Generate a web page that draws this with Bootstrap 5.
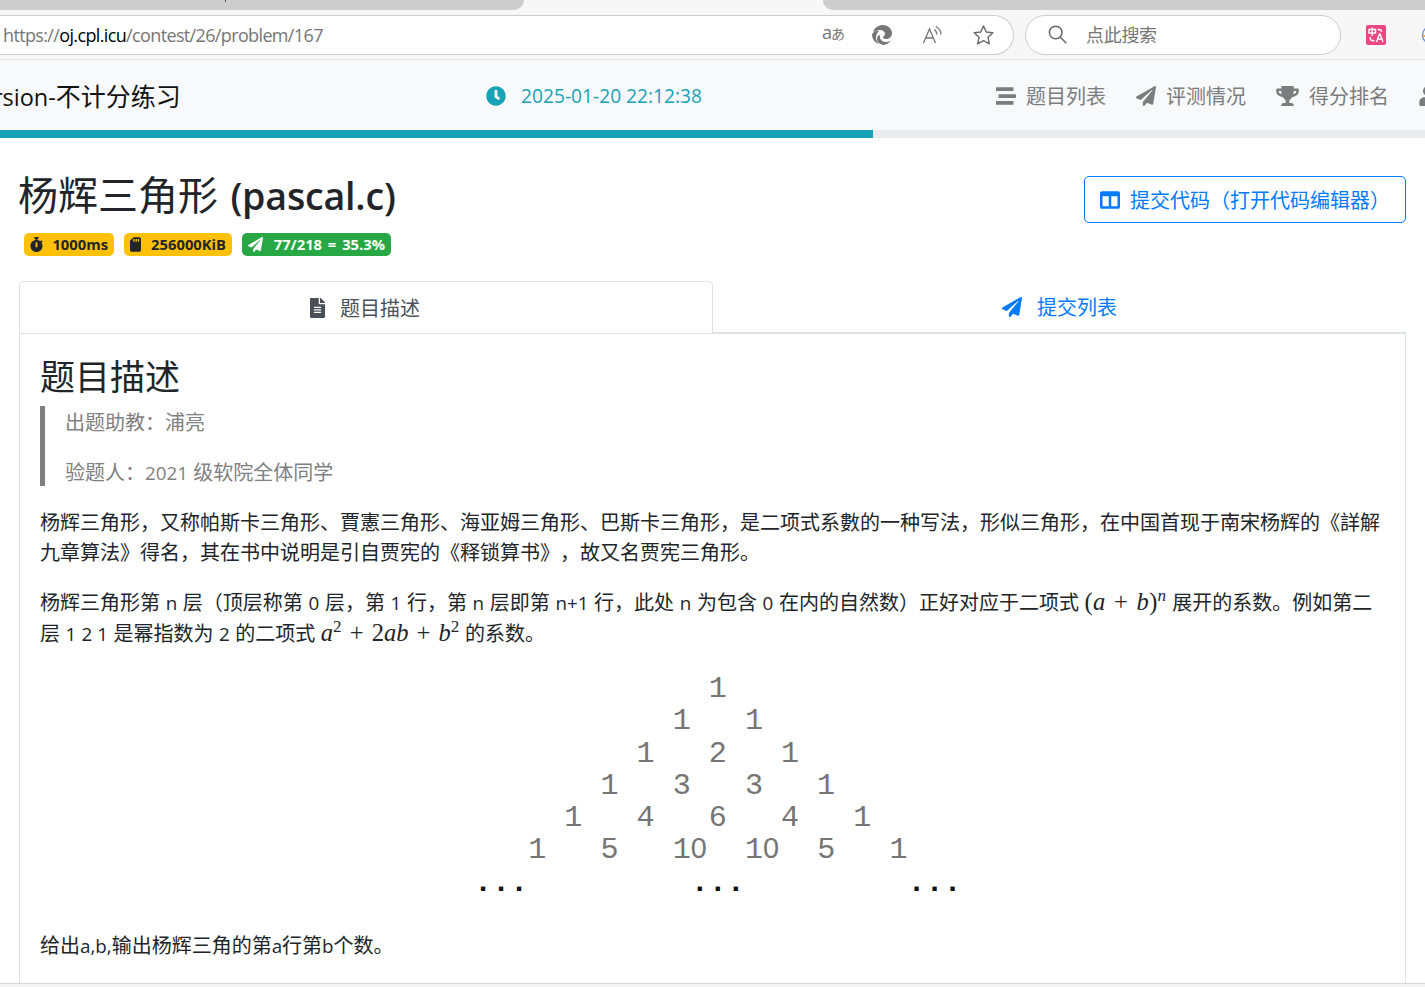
<!DOCTYPE html>
<html lang="zh-CN">
<head>
<meta charset="utf-8">
<title>杨辉三角形 (pascal.c)</title>
<link href="https://cdn.jsdelivr.net/npm/bootstrap@5.3.0/dist/css/bootstrap.min.css" rel="stylesheet">
<style>
:root{--bs-body-font-family:"Open Sans","Noto Sans CJK SC",sans-serif}
body{font-size:20px;line-height:30px;color:#212529;height:987px;overflow:hidden;text-spacing-trim:space-all;font-kerning:normal}
svg{fill:currentColor;flex:none;display:block}
.l-s{letter-spacing:-.64px;margin-left:-1px;padding-bottom:1px}
.latin{font-size:.94em}
.tabstrip{height:10px;background:#f7f7f7}
.tab-l{width:524px;background:#cdcdcd;border-bottom-right-radius:10px}
.tab-l::before{content:"";display:block;width:1px;height:2px;margin-left:225px;background:#555}
.tab-r{width:602px;background:#cdcdcd;border-bottom-left-radius:10px}
.toolbar{height:50px;background:#f7f7f7;border-bottom:1px solid #e6e8ec;padding-top:5px;color:#767676;overflow:hidden}
.toolbar>*,.topnav>*{flex:none}
.addr{width:1014px;height:40px;background:#fff;border:1px solid #cdcdcd;border-left:0;border-radius:0 20px 20px 0;padding-left:4px;font-size:18px}
.addr .ico-a{margin-left:28px}
.search{width:316px;height:40px;background:#fff;border:1px solid #cdcdcd;border-radius:20px;margin-left:11px;padding-left:22px;font-size:18px;letter-spacing:-.3px}
.topnav{height:70px;background:#f8f9fb;white-space:nowrap;color:#7b7c7d;padding-top:2px;overflow:hidden}
.topnav>span{padding-top:2px}
.brand{width:486px;font-size:25px;color:#111}
.clock{width:510px;color:#17a2b8}
.clock .latin{font-size:.96em}
.timebar{height:8px;border-radius:0;background:#e9ecef}
.timebar .progress-bar{background:#17a2b8}
.head{padding:38px 19px 0;height:143px}
h1{font-size:40px;line-height:48px;font-weight:500;margin:-5px 0 0 -1px;white-space:nowrap;word-spacing:2px}
h1 .cjk,h2{font-weight:400}
h1 .latin{font-weight:600;letter-spacing:-.2px}
.tag{height:23px;border-radius:5px;padding:0 6px;font-size:15px;font-weight:700;line-height:21px;background:#ffc107;padding-bottom:1px;word-spacing:2px}
.tag .latin{font-size:.985em}
.tag-ok{background:#28a745;color:#fff}
.open-btn{width:322px;height:47px;border:1px solid #007bff;color:#007bff;border-radius:5px;padding:1px 0 0 15px;font-size:20px;white-space:nowrap}
.pane-tabs{margin:0 19px;height:52px}
.pane-tabs span{padding-top:2px}
.pane-tabs .on{width:694px;border:1px solid #dee2e6;border-bottom:0;border-radius:5px 5px 0 0;color:#495057;padding-right:2px}
.pane-tabs .off{border-bottom:1px solid #dee2e6;color:#007bff}
.pane-tabs .off span{padding-top:3px}
.panel{margin:0 19px;height:650px;border:1px solid #dee2e6;border-bottom:0;padding:19px 19px 0 20px;white-space:nowrap}
.panel p{margin:0 0 20px}
h2{font-size:35px;line-height:42px;margin:3px 0 8px}
.note{border-left:5px solid #808080;color:#808080;padding:1.5px 0 0 20px;height:80px;margin-bottom:22px}
.tex{font-family:"Liberation Serif",serif;font-size:24.5px;line-height:1;word-spacing:2px}
.tex sup{font-size:.7em;top:-.55em}
.tri{font:30.1px/32.25px "Liberation Mono",monospace;color:#757575;margin:24px 0 0 434px;overflow:visible;height:258px}
.tri .z{font-family:"Liberation Sans",sans-serif;font-size:.96em;font-weight:400;letter-spacing:.069em;line-height:1}
.tri .dots{color:#111;font-weight:700}
.foot{height:4px;background:#f5f5f5;border-top:1px solid #d5d5d5}
</style>
</head>
<body>
<div class="tabstrip d-flex justify-content-between"><div class="tab-l"></div><div class="tab-r"></div></div>
<div class="toolbar d-flex">
  <div class="addr d-flex align-items-center">
    <span class="l-s me-auto">https://<span class="text-black">oj.cpl.icu</span>/contest/26/problem/167</span>
    <span style="font-size:18px;letter-spacing:-1px;line-height:20px;margin-top:-4px">a<span style="font-size:14px">あ</span></span>
    <svg class="ico-a" width="20" height="20" viewBox="0 0 20 20"><path d="M1 7C3 2 7 0 11 0c5 0 9 4 9 8 0 4-3 6-6 6-2 0-3-1-3-2 1-1 2-2 2-3 0-3-3-4-5-4C5 5 3 6 1 7z"/><path d="M0 9c2-3 5-4 7-3-2 2-3 4-3 7 0 2 1 4 3 6C3 18 0 14 0 9z"/><path d="M8 10c-1 4 2 7 6 7 2 0 4-1 5-2-2 4-6 5-8 5-4-1-6-3-6-6 0-2 1-4 3-4z"/></svg>
    <svg style="margin-left:30px" width="21" height="20" viewBox="0 0 21 20"><path fill="none" stroke="#767676" stroke-width="1.300" d="M1.500 18 7.500 4l6 14M3.500 13h8M12 4.500c2 1.200 2.800 2.800 2.800 5M14 1.500c3.300 2 5 4.500 5 8"/></svg>
    <svg style="margin:0 19px 0 30px" width="21" height="20" viewBox="0 0 21 20"><path fill="none" stroke="#686868" stroke-width="1.4" stroke-linejoin="round" d="m10.500 1 2.800 6 6.500.8-4.800 4.500 1.300 6.500-5.800-3.200-5.800 3.200L6 12.300 1.200 7.800 7.700 7z"/></svg>
  </div>
  <div class="search d-flex align-items-center">
    <svg width="20" height="20" viewBox="0 0 20 20"><path fill="none" stroke="#666" stroke-width="1.5" d="M14 7.500a6.300 6.300 0 1 1-12.600 0 6.300 6.300 0 0 1 12.600 0zM12.300 12.200l6 6"/></svg>
    <span style="margin-left:18px">点此搜索</span>
  </div>
  <svg style="margin:10px 0 0 25px" width="20" height="20" viewBox="0 0 20 20"><rect width="20" height="20" rx="2" fill="#ec4684"/><path fill="none" stroke="#fff" stroke-width="1.400" d="M3 4.500h6.500v3.500H3zM6.200 2.500V11M11.500 4.500q4-.5 4 2.500M4 12q0 4.500 4.500 3.500M10.500 17l3-8h.5l3 8M11.500 14h4.500"/></svg>
  <svg style="margin:10px 0 0 35px" width="20" height="20" viewBox="0 0 20 20"><circle cx="10" cy="10" r="8.500" fill="#fff" stroke="#7c94c8" stroke-width="1.500"/><path d="M2 11h8" stroke="#efa94f" stroke-width="2"/></svg>
</div>
<nav class="topnav d-flex align-items-center">
  <div class="brand"><span style="margin-left:-7px"><span class="latin">rsion-</span>不计分练习</span></div>
  <div class="clock d-flex align-items-center"><svg width="20" height="20" viewBox="0 0 512 512"><path d="M256 8C119 8 8 119 8 256s111 248 248 248 248-111 248-248S393 8 256 8zm57.100 350.100L224.900 294c-3.100-2.300-4.900-5.900-4.900-9.700V116c0-6.600 5.400-12 12-12h48c6.600 0 12 5.400 12 12v137.700l63.500 46.200c5.400 3.900 6.500 11.400 2.600 16.800l-28.200 38.800c-3.900 5.300-11.400 6.500-16.800 2.600z"/></svg><span class="latin" style="margin-left:15px">2025-01-20 22:12:38</span></div>
  <svg width="20" height="20" viewBox="0 0 512 512"><path d="M16 128h416c8.840 0 16-7.160 16-16V48c0-8.840-7.160-16-16-16H16C7.160 32 0 39.160 0 48v64c0 8.840 7.160 16 16 16zm480 80H80c-8.840 0-16 7.160-16 16v64c0 8.840 7.160 16 16 16h416c8.840 0 16-7.160 16-16v-64c0-8.840-7.160-16-16-16zm-64 176H16c-8.840 0-16 7.160-16 16v64c0 8.840 7.160 16 16 16h416c8.840 0 16-7.160 16-16v-64c0-8.840-7.160-16-16-16z"/></svg>
  <span style="margin:0 30px 0 10px">题目列表</span>
  <svg width="20" height="20" viewBox="0 0 512 512"><path id="plane" d="M476 3.200L12.500 270.600c-18.100 10.400-15.800 35.600 2.200 43.200L121 358.400l287.300-253.200c5.500-4.900 13.300 2.600 8.600 8.300L176 407v80.500c0 23.600 28.500 32.900 42.500 15.800L282 426l124.600 52.200c14.200 6 30.400-2.900 33-18.200l72-432C515 7.800 493.300-6.800 476 3.200z"/></svg>
  <span style="margin:0 30px 0 10px">评测情况</span>
  <svg width="23" height="20" viewBox="0 0 576 512"><path d="M552 64H448V24c0-13.300-10.700-24-24-24H152c-13.300 0-24 10.700-24 24v40H24C10.700 64 0 74.700 0 88v56c0 35.700 22.500 72.400 61.900 100.700 31.500 22.700 69.800 37.100 110 41.700C203.300 338.500 240 360 240 360v72h-48c-35.300 0-64 20.700-64 56v12c0 6.600 5.400 12 12 12h296c6.600 0 12-5.400 12-12v-12c0-35.300-28.700-56-64-56h-48v-72s36.700-21.500 68.100-73.600c40.300-4.600 78.600-19 110-41.700 39.300-28.300 61.900-65 61.900-100.700V88c0-13.300-10.700-24-24-24zM99.300 192.800C74.900 175.200 64 155.600 64 144v-16h64.200c1 32.600 5.800 61.200 12.800 86.200-15.100-5.200-29.200-12.400-41.700-21.400zM512 144c0 16.100-17.700 36.100-35.300 48.800-12.500 9-26.700 16.200-41.800 21.400 7-25 11.800-53.600 12.800-86.200H512v16z"/></svg>
  <span style="margin:0 30px 0 10px">得分排名</span>
  <svg width="18" height="20" viewBox="0 0 448 512"><path d="M224 256c70.700 0 128-57.300 128-128S294.700 0 224 0 96 57.300 96 128s57.300 128 128 128zm89.600 32H134.400C60.200 288 0 348.200 0 422.400V464c0 26.500 21.500 48 48 48h352c26.500 0 48-21.500 48-48v-41.600c0-74.200-60.200-134.400-134.400-134.400z"/></svg>
</nav>
<div class="progress timebar"><div class="progress-bar" style="width:61.26%"></div></div>
<header class="head d-flex justify-content-between">
  <div>
    <h1><span class="cjk">杨辉三角形</span> <span class="latin">(pascal.c)</span></h1>
    <div class="d-flex" style="gap:10px;margin:14px 0 0 5px">
      <div class="tag d-flex align-items-center justify-content-between" style="width:90px;margin-top:-1px"><svg width="13" height="15" viewBox="0 0 448 512"><path d="M432 304c0 114.900-93.100 208-208 208S16 418.900 16 304c0-104 76.300-190.200 176-205.500V64h-28c-6.600 0-12-5.400-12-12V12c0-6.600 5.400-12 12-12h120c6.600 0 12 5.400 12 12v40c0 6.600-5.400 12-12 12h-28v34.500c37.500 5.800 71.700 21.600 99.700 44.600l27.500-27.500c4.700-4.700 12.300-4.700 17 0l28.300 28.300c4.700 4.700 4.700 12.300 0 17l-30 30C419.700 223.300 432 262.200 432 304zm-176 36V188.500c0-6.600-5.400-12-12-12h-40c-6.600 0-12 5.400-12 12V340c0 6.600 5.400 12 12 12h40c6.600 0 12-5.400 12-12z"/></svg><span class="latin">1000ms</span></div>
      <div class="tag d-flex align-items-center justify-content-between" style="width:108px;margin-top:-1px"><svg width="11" height="15" viewBox="0 0 384 512"><path d="M320 0H128L0 128v320c0 35.300 28.700 64 64 64h256c35.300 0 64-28.700 64-64V64c0-35.300-28.700-64-64-64zM160 160h-48V64h48v96zm80 0h-48V64h48v96zm80 0h-48V64h48v96z"/></svg><span class="latin">256000KiB</span></div>
      <div class="tag tag-ok d-flex align-items-center justify-content-between" style="width:149px;margin-top:-1px"><svg width="15" height="15" viewBox="0 0 512 512"><use href="#plane"/></svg><span class="latin">77/218 = 35.3%</span></div>
    </div>
  </div>
  <button class="btn open-btn d-flex align-items-center"><svg width="20" height="20" viewBox="0 0 512 512"><path d="M464 32H48C21.490 32 0 53.490 0 80v352c0 26.510 21.490 48 48 48h416c26.510 0 48-21.490 48-48V80c0-26.510-21.490-48-48-48zM224 416H64V160h160v256zm224 0H288V160h160v256z"/></svg><span style="margin-left:10px;padding-top:1px">提交代码（打开代码编辑器）</span></button>
</header>
<div class="pane-tabs d-flex">
  <div class="on d-flex align-items-center justify-content-center"><svg width="15" height="20" viewBox="0 0 384 512"><path d="M224 136V0H24C10.700 0 0 10.700 0 24v464c0 13.300 10.700 24 24 24h336c13.300 0 24-10.700 24-24V160H248c-13.200 0-24-10.800-24-24zm64 236c0 6.600-5.400 12-12 12H108c-6.600 0-12-5.400-12-12v-8c0-6.600 5.400-12 12-12h168c6.600 0 12 5.400 12 12v8zm0-64c0 6.600-5.400 12-12 12H108c-6.600 0-12-5.400-12-12v-8c0-6.600 5.400-12 12-12h168c6.600 0 12 5.400 12 12v8zm0-72v8c0 6.600-5.400 12-12 12H108c-6.600 0-12-5.400-12-12v-8c0-6.600 5.400-12 12-12h168c6.600 0 12 5.400 12 12zm96-114.100v6.100H256V0h6.100c6.400 0 12.500 2.500 17 7l97.900 98c4.500 4.500 7 10.600 7 16.900z"/></svg><span style="margin-left:15px">题目描述</span></div>
  <div class="off flex-fill d-flex align-items-center justify-content-center"><svg width="20" height="20" viewBox="0 0 512 512"><use href="#plane"/></svg><span style="margin-left:15px">提交列表</span></div>
</div>
<main class="panel">
  <h2>题目描述</h2>
  <div class="note"><p>出题助教：浦亮</p><p>验题人：<span class="latin">2021</span> 级软院全体同学</p></div>
  <p>杨辉三角形，又称帕斯卡三角形、賈憲三角形、海亚姆三角形、巴斯卡三角形，是二项式系數的一种写法，形似三角形，在中国首现于南宋杨辉的《詳解<br>九章算法》得名，其在书中说明是引自贾宪的《释锁算书》，故又名贾宪三角形。</p>
  <div style="word-spacing:.45px">杨辉三角形第 <span class="latin">n</span> 层（顶层称第 <span class="latin">0</span> 层，第 <span class="latin">1</span> 行，第 <span class="latin">n</span> 层即第 <span class="latin">n+1</span> 行，此处 <span class="latin">n</span> 为包含 <span class="latin">0</span> 在内的自然数）正好对应于二项式 <span class="tex" style="letter-spacing:.3px">(<i>a</i> + <i>b</i>)<sup><i>n</i></sup></span> 展开的系数。例如第二</div>
  <div style="margin-top:1px;word-spacing:.3px">层 <span class="latin">1 2 1</span> 是幂指数为 <span class="latin">2</span> 的二项式 <span class="tex"><i>a</i><sup>2</sup> + 2<i>ab</i> + <i>b</i><sup>2</sup></span> 的系数。</div>
<pre class="tri">             1
           1   1
         1   2   1
       1   3   3   1
     1   4   6   4   1
   1   5   1<span class="z">0</span>  1<span class="z">0</span>  5   1
<span class="dots">...         ...         ...</span></pre>
  <div>给出<span class="latin">a,b,</span>输出杨辉三角的第<span class="latin">a</span>行第<span class="latin">b</span>个数。</div>
</main>
<div class="foot"></div>
<script src="https://cdn.jsdelivr.net/npm/bootstrap@5.3.0/dist/js/bootstrap.bundle.min.js"></script>
</body>
</html>
